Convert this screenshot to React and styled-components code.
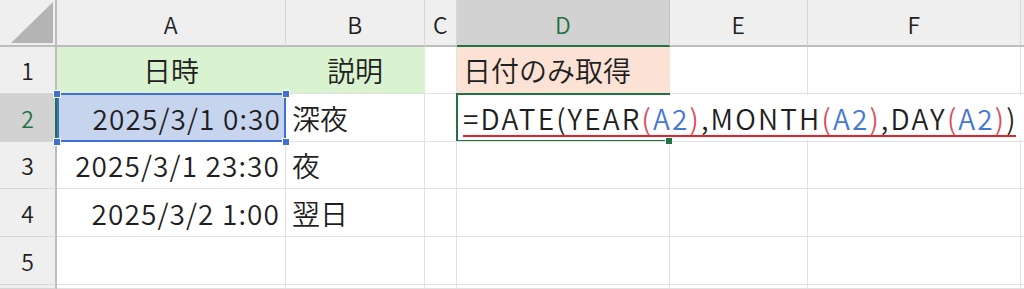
import React from "react";
import styled, { createGlobalStyle, css } from "styled-components";

const Global = createGlobalStyle`
  html, body { margin: 0; padding: 0; background: #fff; }
  body { font-family: "Noto Sans CJK JP", "Noto Sans", sans-serif; color: #1f1f1f; }
`;

const Sheet = styled.div`
  display: grid;
  grid-template-columns: 57px 229px 139px 32px 213px 138px 213px 1fr;
  grid-template-rows: 47px 47px 48px 47px 48px 48px 1fr;
  width: 1024px;
  height: 289px;
  overflow: hidden;
  background: #fff;
`;

const Corner = styled.div`
  background: #efefef;
  border-right: 2px solid #bdbdbd;
  border-bottom: 2px solid #bdbdbd;
  box-sizing: border-box;
  display: flex;
  align-items: flex-end;
  justify-content: flex-end;
  padding: 0 2px 2px 0;
`;

const ColHead = styled.div`
  box-sizing: border-box;
  background: ${(p) => (p.$sel ? "#d2d2d2" : "#efefef")};
  color: ${(p) => (p.$sel ? "#1e7145" : "#1f1f1f")};
  border-right: 1px solid ${(p) => (p.$sel ? "#c4c4c4" : "#d6d6d6")};
  border-bottom: 2px solid ${(p) => (p.$sel ? "#217346" : "#bdbdbd")};
  display: flex;
  align-items: center;
  justify-content: center;
  font-size: 23px;
  font-weight: 350;
  letter-spacing: 0.5px;
  padding-top: 2px;
`;

const RowHead = styled.div`
  box-sizing: border-box;
  background: ${(p) => (p.$sel ? "#d2d2d2" : "#efefef")};
  color: ${(p) => (p.$sel ? "#1e7145" : "#1f1f1f")};
  border-right: 2px solid ${(p) => (p.$sel ? "#217346" : "#bdbdbd")};
  border-bottom: 1px solid #d6d6d6;
  display: flex;
  align-items: center;
  justify-content: center;
  font-size: 23px;
  font-weight: 350;
`;

const Cell = styled.div`
  position: relative;
  box-sizing: border-box;
  background: ${(p) => p.$fill || "#fff"};
  border-right: 1px solid ${(p) => (p.$fill ? p.$fill : "#e1e1e1")};
  border-bottom: 1px solid #e1e1e1;
  display: flex;
  align-items: center;
  justify-content: ${(p) =>
    p.$align === "right" ? "flex-end" : p.$align === "center" ? "center" : "flex-start"};
  padding: ${(p) => (p.$align === "right" ? "0 5px 0 0" : p.$align === "center" ? "0" : "0 0 0 6px")};
  font-size: 28px;
  font-weight: 350;
  letter-spacing: ${(p) => (p.$align === "right" ? "1.1px" : "0")};
  white-space: nowrap;
  ${(p) =>
    p.$selected &&
    css`
      background: #c6d4ee;
      border: none;
      z-index: 2;
      &::after {
        content: "";
        position: absolute;
        inset: -1px 0 0 0;
        border: 2px solid #3f6fd0;
        pointer-events: none;
      }
    `}
  ${(p) =>
    p.$editing &&
    css`
      z-index: 3;
      overflow: visible;
      padding: 0;
      &::after {
        content: "";
        position: absolute;
        inset: -1px -1px 0 -1px;
        border: 2px solid #217346;
        pointer-events: none;
      }
    `}
`;

const Handle = styled.span`
  position: absolute;
  width: 6px;
  height: 6px;
  background: ${(p) => p.$color};
  border: 1px solid #fff;
  box-sizing: content-box;
  z-index: 4;
  ${(p) => (p.$top ? "top: -4px;" : "bottom: -4px;")}
  ${(p) => (p.$left ? "left: -4px;" : "right: -4px;")}
`;

const Editor = styled.span`
  position: relative;
  align-self: stretch;
  display: flex;
  align-items: center;
  background: #fff;
  margin: 1px 0 1px 1px;
  padding: 0 3px 0 5px;
  font-size: 28px;
  font-weight: 350;
  letter-spacing: 2.15px;
  z-index: 1;
  &::after {
    content: "";
    position: absolute;
    left: 5px;
    right: 5px;
    bottom: 3px;
    height: 2px;
    background: #e6232b;
  }
`;

const Tok = styled.span`
  color: ${(p) => (p.$k === "ref" ? "#4678d2" : p.$k === "paren" ? "#d9505d" : "#1f1f1f")};
`;

const cols = ["A", "B", "C", "D", "E", "F", ""];

const GREEN = "#d9f2d0";
const PEACH = "#fbe2d5";

const formula = [
  ["t", "=DATE(YEAR"],
  ["paren", "("],
  ["ref", "A2"],
  ["paren", ")"],
  ["t", ",MONTH"],
  ["paren", "("],
  ["ref", "A2"],
  ["paren", ")"],
  ["t", ",DAY"],
  ["paren", "("],
  ["ref", "A2"],
  ["paren", ")"],
  ["t", ")"],
];

const rows = [
  [
    { v: "日時", fill: GREEN, align: "center" },
    { v: "説明", fill: GREEN, align: "center" },
    {},
    { v: "日付のみ取得", fill: PEACH, align: "left" },
    {},
    {},
    {},
  ],
  [
    { v: "2025/3/1 0:30", align: "right", selected: true },
    { v: "深夜" },
    {},
    { editing: true },
    {},
    {},
    {},
  ],
  [{ v: "2025/3/1 23:30", align: "right" }, { v: "夜" }, {}, {}, {}, {}, {}],
  [{ v: "2025/3/2 1:00", align: "right" }, { v: "翌日" }, {}, {}, {}, {}, {}],
  [{}, {}, {}, {}, {}, {}, {}],
  [{}, {}, {}, {}, {}, {}, {}],
];

export default function App() {
  return (
    <>
      <Global />
      <Sheet>
        <Corner>
          <svg width="42" height="41" viewBox="0 0 42 41">
            <polygon points="42,0 42,41 0,41" fill="#b4b4b4" />
          </svg>
        </Corner>
        {cols.map((c, i) => (
          <ColHead key={i} $sel={c === "D"}>
            {c}
          </ColHead>
        ))}
        {rows.map((r, ri) => (
          <React.Fragment key={ri}>
            <RowHead $sel={ri === 1}>{ri < 5 ? ri + 1 : ""}</RowHead>
            {r.map((c, ci) => (
              <Cell
                key={ci}
                $fill={c.fill}
                $align={c.align}
                $selected={c.selected}
                $editing={c.editing}
              >
                {c.v}
                {c.editing && (
                  <>
                    <Editor>
                      {formula.map(([k, t], i) => (
                        <Tok key={i} $k={k}>
                          {t}
                        </Tok>
                      ))}
                    </Editor>
                    <Handle $color="#217346" />
                  </>
                )}
                {c.selected && (
                  <>
                    <Handle $color="#3f6fd0" $top $left />
                    <Handle $color="#3f6fd0" $top />
                    <Handle $color="#3f6fd0" $left />
                    <Handle $color="#3f6fd0" />
                  </>
                )}
              </Cell>
            ))}
          </React.Fragment>
        ))}
      </Sheet>
    </>
  );
}
